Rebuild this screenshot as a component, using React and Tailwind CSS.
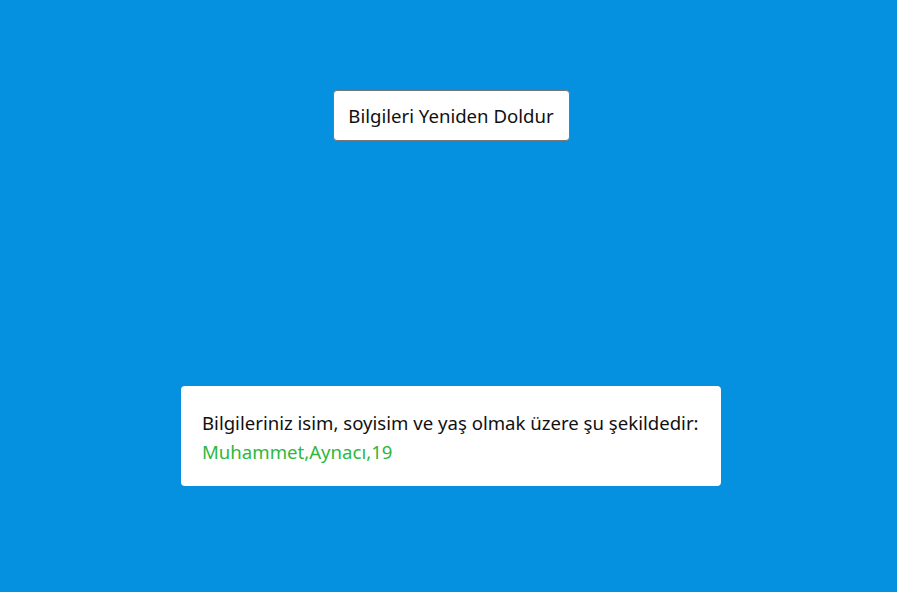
export default function App() {
  return (
    <div
      className="min-h-[592px] w-full bg-[#0590e0] flex flex-col items-center pl-[5px]"
      style={{ fontFamily: '"Noto Sans", "Open Sans", sans-serif' }}
    >
      <button className="mt-[90px] h-[51px] w-[237px] bg-white border border-[#767676] rounded-[4px] text-[18.6px] text-[#111]">
        Bilgileri Yeniden Doldur
      </button>

      <div className="mt-[245px] w-[540px] h-[100px] bg-white rounded-[4px] px-[21px] py-[22px] text-[18.6px] leading-[29px]">
        <p className="text-[#111]">Bilgileriniz isim, soyisim ve yaş olmak üzere şu şekildedir:</p>
        <p className="text-[#2db83d]">Muhammet,Aynacı,19</p>
      </div>
    </div>
  );
}
